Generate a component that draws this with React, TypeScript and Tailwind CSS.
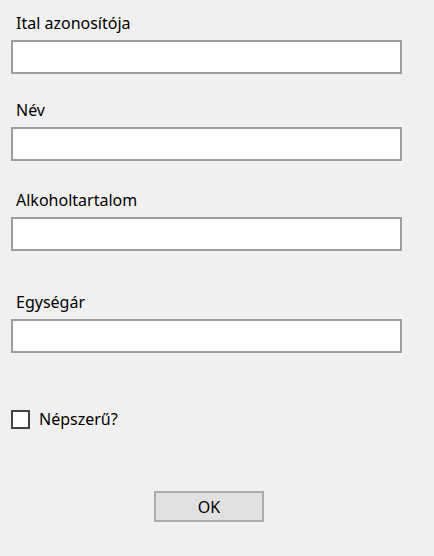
function Field({ label, className }: { label: string; className?: string }) {
  return (
    <div className={className}>
      <div className="pl-[5px] text-[16px] leading-[22px] text-black">{label}</div>
      <input
        type="text"
        className="mt-[6px] block h-[34px] w-[391px] border-2 border-[#9d9d9d] bg-white outline-none"
      />
    </div>
  )
}

export default function App() {
  return (
    <div
      className="h-[556px] w-[434px] bg-[#f0f0f0] pl-[11px] pt-[12px]"
      style={{ fontFamily: '"Noto Sans", "Open Sans", sans-serif' }}
    >
      <Field label="Ital azonosítója" />
      <Field label="Név" className="mt-[25px]" />
      <Field label="Alkoholtartalom" className="mt-[28px]" />
      <Field label="Egységár" className="mt-[40px]" />

      <label className="mt-[55px] flex items-center gap-[9px]">
        <span className="h-[19px] w-[19px] border-2 border-[#444] bg-white" />
        <span className="text-[16px] leading-[22px] text-black">Népszerű?</span>
      </label>

      <div className="mt-[61px] flex pl-[143px]">
        <button className="h-[31px] w-[110px] border-2 border-[#adadad] bg-[#e1e1e1] text-[16px] text-black">
          OK
        </button>
      </div>
    </div>
  )
}
